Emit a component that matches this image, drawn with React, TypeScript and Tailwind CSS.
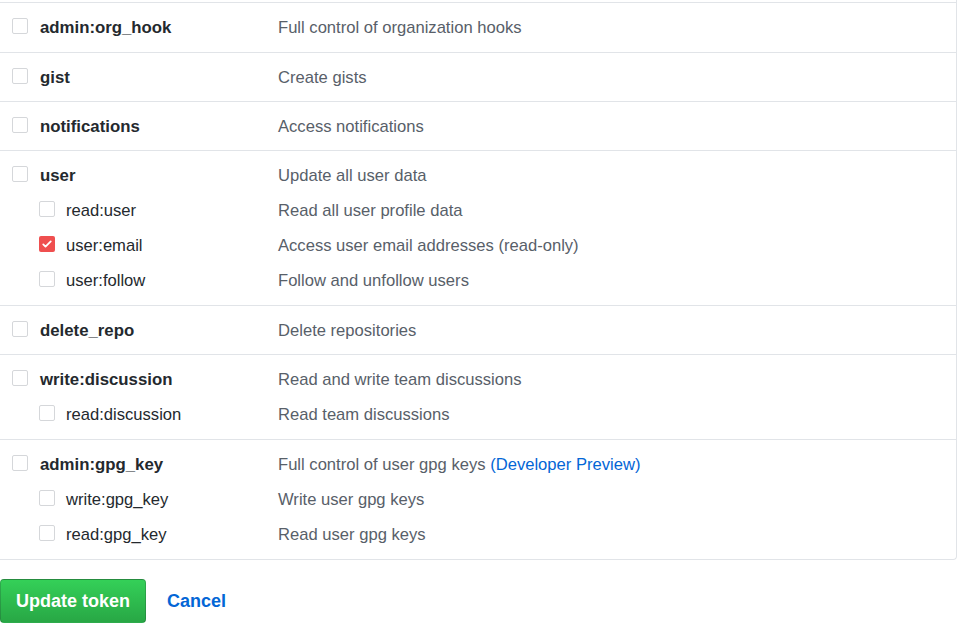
import { Fragment } from "react";

type Scope = {
  name: string;
  desc: string;
  checked?: boolean;
  preview?: boolean;
  children?: Scope[];
};

const scopes: Scope[] = [
  { name: "admin:org_hook", desc: "Full control of organization hooks" },
  { name: "gist", desc: "Create gists" },
  { name: "notifications", desc: "Access notifications" },
  {
    name: "user",
    desc: "Update all user data",
    children: [
      { name: "read:user", desc: "Read all user profile data" },
      { name: "user:email", desc: "Access user email addresses (read-only)", checked: true },
      { name: "user:follow", desc: "Follow and unfollow users" },
    ],
  },
  { name: "delete_repo", desc: "Delete repositories" },
  {
    name: "write:discussion",
    desc: "Read and write team discussions",
    children: [{ name: "read:discussion", desc: "Read team discussions" }],
  },
  {
    name: "admin:gpg_key",
    desc: "Full control of user gpg keys",
    preview: true,
    children: [
      { name: "write:gpg_key", desc: "Write user gpg keys" },
      { name: "read:gpg_key", desc: "Read user gpg keys" },
    ],
  },
];

function Checkbox({ checked }: { checked?: boolean }) {
  if (checked) {
    return (
      <span className="mb-[2px] flex h-[16px] w-[16px] shrink-0 items-center justify-center rounded-[2px] bg-[#ef4f4f]">
        <svg viewBox="0 0 16 16" className="h-[12px] w-[12px]">
          <path d="M3 8.5l3 3 7-7" fill="none" stroke="#fff" strokeWidth="2.4" strokeLinecap="round" strokeLinejoin="round" />
        </svg>
      </span>
    );
  }
  return <span className="mb-[2px] block h-[16px] w-[16px] shrink-0 rounded-[2px] border border-[#d5d7da] bg-white" />;
}

function Line({ scope, sub }: { scope: Scope; sub?: boolean }) {
  return (
    <div className={`flex items-center ${sub ? "h-[35px]" : "h-[36px]"}`}>
      <div className={`flex w-[278px] shrink-0 items-center ${sub ? "gap-[11px] pl-[39px]" : "gap-[12px] pl-[12px]"}`}>
        <Checkbox checked={scope.checked} />
        <span className={`mt-[2px] ${sub ? "text-[#24292e]" : "text-[16.8px] font-bold text-[#24292e]"}`}>{scope.name}</span>
      </div>
      <div className="mt-[2px] text-[#586069]">
        {scope.desc}
        {scope.preview && <span className="text-[#0366d6]"> (Developer Preview)</span>}
      </div>
    </div>
  );
}

export default function App() {
  return (
    <div className="min-h-[633px] w-[961px] overflow-hidden bg-white text-[16.6px] font-['Liberation_Sans',Arial,sans-serif]">
      <div className="w-[957px] rounded-br-[4px] border-r border-b border-[#e1e4e8] pt-[2px]">
        {scopes.map((s, i) => (
          <div
            key={s.name}
            className={`border-t border-[#e1e4e8] pt-[6px] ${s.children || i === 0 ? "pb-[7px]" : "pb-[6px]"}`}
          >
            <Line scope={s} />
            {s.children?.map((c) => (
              <Fragment key={c.name}>
                <Line scope={c} sub />
              </Fragment>
            ))}
          </div>
        ))}
      </div>
      <div className="mt-[19px] flex items-center gap-[21px]">
        <button className="h-[44px] w-[146px] rounded-[4px] border border-[rgba(27,31,35,0.2)] bg-gradient-to-b from-[#34d058] to-[#28a745] text-[18px] font-bold text-white">
          Update token
        </button>
        <a className="text-[18px] font-bold text-[#0366d6]">Cancel</a>
      </div>
    </div>
  );
}
